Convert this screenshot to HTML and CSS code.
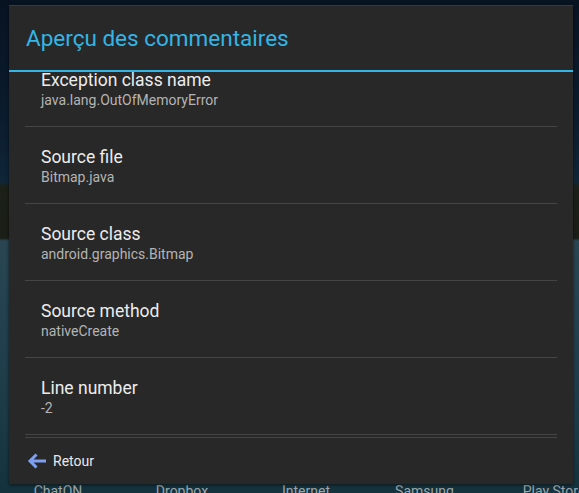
FILE: index.html
```html
<!DOCTYPE html>
<html lang="fr">
<head>
<meta charset="utf-8">
<title>Aperçu des commentaires</title>
<link rel="stylesheet" href="styles.css">
</head>
<body>
<div class="dialog">
  <div class="header">Aperçu des commentaires</div>
  <div class="list">
    <div class="scroller">
      <div class="item"><div class="name">Exception class name</div><div class="value">java.lang.OutOfMemoryError</div></div>
      <div class="item"><div class="name">Source file</div><div class="value">Bitmap.java</div></div>
      <div class="item"><div class="name">Source class</div><div class="value">android.graphics.Bitmap</div></div>
      <div class="item"><div class="name">Source method</div><div class="value">nativeCreate</div></div>
      <div class="item"><div class="name">Line number</div><div class="value">-2</div></div>
    </div>
  </div>
  <div class="footer">
    <div class="back">
      <svg class="arrow" width="20" height="18" viewBox="0 0 20 18"><path d="M19 9H3M9.5 2.5L3 9l6.5 6.5" fill="none" stroke="#7d9ff2" stroke-width="3" stroke-linecap="butt" stroke-linejoin="miter"/></svg>
      <span>Retour</span>
    </div>
  </div>
</div>
<div class="dock">
  <span>ChatON</span><span>Dropbox</span><span>Internet</span><span>Samsung...</span><span>Play Store</span>
</div>
</body>
</html>
```
FILE: styles.css
```css
html, body {
  margin: 0;
  padding: 0;
  height: 493px;
  overflow: hidden;
}
body {
  font-family: Roboto, "Noto Sans", sans-serif;
  background:
    linear-gradient(to bottom, #081322 0, #0b1c2e 120px, #0f2638 182px, #1b2019 186px, #1a1e17 238px, #2a4652 241px, #244250 300px, #1c3a46 420px, #13323d 493px);
  padding-top: 5px;
  box-sizing: border-box;
}
.dialog {
  position: relative;
  z-index: 1;
  margin-left: 9px;
  width: 564px;
  height: 479px;
  background: #282828;
  border-top: 1px solid #3a3a3a;
  box-sizing: border-box;
  display: flex;
  flex-direction: column;
  box-shadow: 0 1px 3px rgba(0,0,0,0.6);
}
.header {
  height: 66px;
  box-sizing: border-box;
  padding: 19px 0 0 17px;
  font-size: 22.5px;
  line-height: 26px;
  color: #33b5e5;
  border-bottom: 2px solid #33b5e5;
  flex: none;
}
.list {
  height: 365px;
  overflow: hidden;
  flex: none;
}
.scroller {
  margin-top: -22px;
}
.item {
  height: 77px;
  box-sizing: border-box;
  margin: 0 16px;
  padding: 20px 0 0 16px;
  border-bottom: 1px solid #454545;
}
.name {
  font-size: 17.5px;
  line-height: 20px;
  color: #ececec;
}
.value {
  margin-top: 2px;
  font-size: 14px;
  line-height: 16px;
  color: #b4b4b4;
}
.footer {
  flex: 1;
  margin: 0 16px;
  border-top: 1px solid #454545;
  display: flex;
  align-items: center;
}
.back {
  display: flex;
  align-items: center;
  gap: 6px;
  margin-left: 2px;
}
.arrow {
  display: block;
}
.back span {
  font-size: 14px;
  line-height: 18px;
  color: #e8e8e8;
}
.dock {
  display: grid;
  grid-template-columns: repeat(5, 124px);
  margin-left: -4px;
  margin-top: -1px;
  font-size: 14px;
  line-height: 16px;
  color: #9aa6ab;
  text-align: center;
}
```
